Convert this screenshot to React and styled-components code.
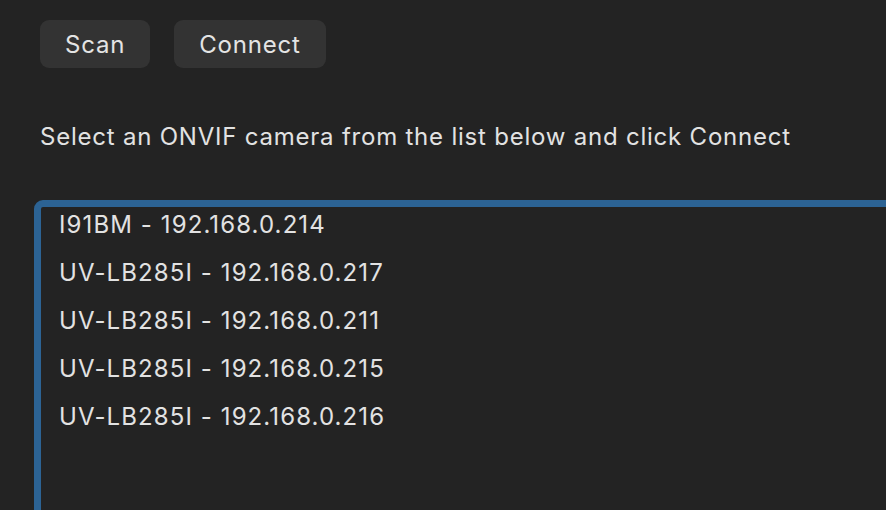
import React from "react";
import styled, { createGlobalStyle } from "styled-components";

const GlobalStyle = createGlobalStyle`
  html, body {
    margin: 0;
    background: #232323;
    overflow: hidden;
  }
`;

const Wrapper = styled.div`
  font-family: Inter, "Noto Sans", sans-serif;
  color: #e2e2e2;
  padding: 20px 0 0 40px;
  width: 886px;
  height: 510px;
  box-sizing: border-box;
  overflow: hidden;
`;

const Toolbar = styled.div`
  display: flex;
  gap: 24px;
`;

const Button = styled.button`
  font-family: inherit;
  font-size: 24px;
  letter-spacing: 0.8px;
  color: #e4e4e4;
  background: #333333;
  border: none;
  border-radius: 9px;
  height: 48px;
  padding: 0 25px;
  cursor: pointer;
`;

const Label = styled.p`
  font-size: 24px;
  letter-spacing: 0.78px;
  line-height: 30px;
  margin: 54px 0 0 0;
`;

const ListBox = styled.div`
  margin: 48px 0 0 -6px;
  width: 900px;
  height: 400px;
  border: 7px solid #2c6394;
  border-radius: 9px;
  box-sizing: border-box;
  overflow: hidden;
`;

const Items = styled.div`
  margin-top: -6px;
`;

const Item = styled.div`
  font-size: 24px;
  letter-spacing: 1.1px;
  line-height: 48px;
  padding-left: 18px;
`;

const cameras = [
  "I91BM - 192.168.0.214",
  "UV-LB285I - 192.168.0.217",
  "UV-LB285I - 192.168.0.211",
  "UV-LB285I - 192.168.0.215",
  "UV-LB285I - 192.168.0.216",
];

const App = () => (
  <Wrapper>
    <GlobalStyle />
    <Toolbar>
      <Button>Scan</Button>
      <Button>Connect</Button>
    </Toolbar>
    <Label>Select an ONVIF camera from the list below and click Connect</Label>
    <ListBox>
      <Items>
        {cameras.map((c, i) => (
          <Item key={i}>{c}</Item>
        ))}
      </Items>
    </ListBox>
  </Wrapper>
);

export default App;
